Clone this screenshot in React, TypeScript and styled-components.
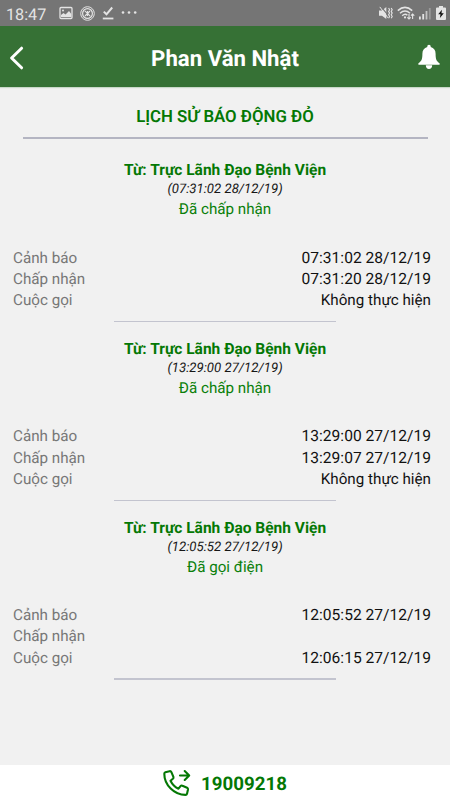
import React from 'react';
import styled, { createGlobalStyle } from 'styled-components';

const GlobalStyle = createGlobalStyle`
  * { box-sizing: border-box; }
  body {
    margin: 0;
    background: #f1f1f1;
    font-family: Roboto, "Noto Sans", sans-serif;
    text-rendering: geometricPrecision;
  }
`;

const Screen = styled.div`
  width: 450px;
  height: 800px;
  display: flex;
  flex-direction: column;
  background: #f1f1f1;
  overflow: hidden;
`;

const StatusBar = styled.div`
  height: 26px;
  flex: none;
  display: flex;
  align-items: center;
  justify-content: space-between;
  padding: 0 4px 0 6px;
  background: #757575;
  color: #e4e4e4;
`;

const Clock = styled.span`
  width: 47px;
  font-size: 16.2px;
  line-height: 26px;
  padding-top: 3px;
`;

const StatusGroup = styled.div<{ $gap: number }>`
  display: flex;
  align-items: center;
  gap: ${(p) => p.$gap}px;
  svg { display: block; }
`;

const Header = styled.header`
  height: 61px;
  flex: none;
  display: grid;
  grid-template-columns: 60px 1fr 60px;
  align-items: center;
  background: #367135;
  box-shadow: 0 1px 1px #c9d8c9;
  svg { display: block; }
`;

const HeaderTitle = styled.h1`
  margin: 0;
  padding-top: 5px;
  text-align: center;
  color: #fff;
  font-size: 22.2px;
  line-height: 28px;
  font-weight: 700;
`;

const HeaderButton = styled.button<{ $end?: boolean }>`
  border: 0;
  background: none;
  height: 61px;
  padding: ${(p) => (p.$end ? '0 9px 0 0' : '3px 0 0 9px')};
  display: flex;
  align-items: center;
  justify-content: ${(p) => (p.$end ? 'flex-end' : 'flex-start')};
`;

const Content = styled.main`
  flex: 1;
  display: flex;
  flex-direction: column;
`;

const PageTitle = styled.h2`
  margin: 19px 0 9px;
  text-align: center;
  font-size: 16.8px;
  line-height: 22px;
  font-weight: 600;
  color: #047804;
`;

const Rule = styled.div`
  height: 2px;
  margin: 0 22.5px 21px;
  background: #b4b5c2;
`;

const Entry = styled.section`
  height: 178.8px;
  display: flex;
  flex-direction: column;
  align-items: center;
`;

const Sender = styled.div`
  font-size: 15.5px;
  line-height: 20px;
  font-weight: 700;
  color: #047804;
`;

const Stamp = styled.div`
  margin-top: 1px;
  font-size: 13.2px;
  line-height: 17px;
  font-style: italic;
  color: #161616;
`;

const State = styled.div`
  font-size: 15.2px;
  line-height: 22px;
  color: #0a7f0a;
`;

const Details = styled.div`
  align-self: stretch;
  margin: 27.5px 19px 9.5px 13px;
`;

const Row = styled.div`
  height: 21.3px;
  display: flex;
  justify-content: space-between;
  font-size: 15.2px;
  line-height: 21.3px;
`;

const Label = styled.span`
  color: #777;
`;

const Value = styled.span<{ $numeric: boolean }>`
  color: #111;
  font-size: ${(p) => (p.$numeric ? '15.6px' : 'inherit')};
`;

const Divider = styled.div`
  width: 222px;
  height: 1.5px;
  background: #c3c4cf;
`;

const CallBar = styled.footer`
  height: 35px;
  flex: none;
  display: flex;
  align-items: center;
  justify-content: center;
  gap: 10px;
  background: #fff;
  color: #047804;
  svg { display: block; }
`;

const Phone = styled.span`
  padding-top: 3px;
  font-size: 18.7px;
  line-height: 24px;
  font-weight: 700;
`;

const ImageIcon = () => (
  <svg width="14" height="14" viewBox="0 0 14 14">
    <rect x="1" y="1.5" width="12" height="11" rx="1" fill="none" stroke="#e4e4e4" strokeWidth="1.3" />
    <circle cx="4" cy="4.6" r="1" fill="#e4e4e4" />
    <path d="M2 11V9l2.5-2 2 1.6L10 5l2.3 3v3z" fill="#e4e4e4" />
  </svg>
);

const CompassIcon = () => (
  <svg width="15" height="15" viewBox="0 0 15 15" fill="none" stroke="#e4e4e4">
    <circle cx="7.5" cy="7.5" r="6.8" strokeWidth="1" />
    <circle cx="7.5" cy="7.5" r="4.9" strokeWidth="1.2" />
    <path d="M4.8 4.8l2.2 2M10.200 10.200L8 8M10 5L5 10M7.500 5v5" strokeWidth="1.1" />
  </svg>
);

const DoneIcon = () => (
  <svg width="12" height="14" viewBox="0 0 12 14" fill="none" stroke="#e4e4e4">
    <path d="M1.8 5.6l2.7 2.7L10.2 1.5" strokeWidth="2" />
    <path d="M.8 12.5h10.6" strokeWidth="1.8" />
  </svg>
);

const MoreIcon = () => (
  <svg width="17" height="14" viewBox="0 0 17 14" fill="#e4e4e4">
    <circle cx="3" cy="6.5" r="1.3" />
    <circle cx="9" cy="6.5" r="1.3" />
    <circle cx="15.2" cy="6.5" r="1.3" />
  </svg>
);

const MuteIcon = () => (
  <svg width="15" height="14" viewBox="0 0 15 14">
    <path d="M1 4.5h3L8.3 1v12L4 9.7H1z" fill="#e4e4e4" />
    <path d="M3 .6l7 8.6" stroke="#757575" strokeWidth="1.1" />
    <path d="M1.8.9l8.2 11" stroke="#e4e4e4" strokeWidth="1" />
    <path d="M10.6 2l1 1.7-1 1.7 1 1.7-1 1.7 1 1.7-1 1.7M13.2 2l1 1.7-1 1.7 1 1.7-1 1.7 1 1.7-1 1.7" fill="none" stroke="#e4e4e4" strokeWidth="1.1" />
  </svg>
);

const WifiIcon = () => (
  <svg width="18" height="14" viewBox="0 0 18 14" fill="none" stroke="#e4e4e4">
    <path d="M.8 4.6Q8 -1.8 15.2 4.6M3 7.2Q8 2.7 13 7.2M5.2 9.7Q8 7 10.4 9.2" strokeWidth="1.5" />
    <circle cx="8" cy="11.4" r="1.1" fill="#e4e4e4" stroke="none" />
    <path d="M12 8v5M10.3 11.3L12 13l1.7-1.7M15.6 13V8M14 9.6L15.6 8l1.7 1.6" strokeWidth="1.1" />
  </svg>
);

const SignalIcon = () => (
  <svg width="13" height="13" viewBox="0 0 13 13" fill="#e4e4e4">
    <rect x="0" y="9.5" width="1.8" height="3" />
    <rect x="3.3" y="7" width="1.8" height="5.5" />
    <rect x="6.6" y="4" width="1.8" height="8.5" fill="#c4c4c4" />
    <rect x="9.9" y="1" width="1.8" height="11.5" fill="#999" />
  </svg>
);

const BatteryIcon = () => (
  <svg width="10" height="14" viewBox="0 0 10 14">
    <path d="M3 0h4v1.6h2q1 0 1 1V13q0 1-1 1H1q-1 0-1-1V2.6q0-1 1-1h2z" fill="#e4e4e4" />
    <path d="M5.9 3.8L2.2 8.2h2.3L3.9 12l3.9-4.7H5.5z" fill="#111" />
  </svg>
);

const BackIcon = () => (
  <svg width="15" height="24" viewBox="0 0 15 24" fill="none" stroke="#fff" strokeWidth="3" strokeLinecap="round" strokeLinejoin="round">
    <path d="M12.6 2.2L2.6 12l10 9.8" />
  </svg>
);

const BellIcon = () => (
  <svg width="24" height="26" viewBox="0 0 24 26" fill="#fff">
    <path d="M12 .8c1 0 1.7.7 1.7 1.7v.4c3.3.8 4.9 3.3 4.9 6.8 0 5.2.7 7.3 4 9.5v1.6H1.4v-1.6c3.3-2.2 4-4.3 4-9.5 0-3.5 1.6-6 4.9-6.8v-.4C10.3 1.5 11 .8 12 .8z" />
    <path d="M8.8 21.3h6.4c0 2.2-1.3 3.8-3.2 3.8s-3.2-1.6-3.2-3.8z" />
  </svg>
);

const CallIcon = () => (
  <svg width="28" height="28" viewBox="0 0 28 28" fill="none" stroke="currentColor" strokeWidth="2.1" strokeLinejoin="round" strokeLinecap="round">
    <path d="M2.3 3.2L6.6 2.2q1.3-.2 1.8.9l2 4.7q.4 1.1-.5 1.9L7.5 11.7q2.6 5.4 8 8l2-2.5q.8-1 1.900-.5l4.700 2q1.100.5.9 1.800l-1 4.200q-.3 1.200-1.500 1.200C11.200 25.900 1.300 16 1.300 4.700q0-1.200 1-1.500z" />
    <path d="M17 6.5h9M21.7 2l4.5 4.5-4.5 4.5" />
  </svg>
);

interface Alert {
  time: string;
  state: string;
  rows: [string, string][];
}

const alerts: Alert[] = [
  {
    time: '(07:31:02 28/12/19)',
    state: 'Đã chấp nhận',
    rows: [['Cảnh báo', '07:31:02 28/12/19'], ['Chấp nhận', '07:31:20 28/12/19'], ['Cuộc gọi', 'Không thực hiện']],
  },
  {
    time: '(13:29:00 27/12/19)',
    state: 'Đã chấp nhận',
    rows: [['Cảnh báo', '13:29:00 27/12/19'], ['Chấp nhận', '13:29:07 27/12/19'], ['Cuộc gọi', 'Không thực hiện']],
  },
  {
    time: '(12:05:52 27/12/19)',
    state: 'Đã gọi điện',
    rows: [['Cảnh báo', '12:05:52 27/12/19'], ['Chấp nhận', ''], ['Cuộc gọi', '12:06:15 27/12/19']],
  },
];

export default function App() {
  return (
    <Screen>
      <GlobalStyle />
      <StatusBar>
        <StatusGroup $gap={6}>
          <Clock>18:47</Clock>
          <StatusGroup $gap={7}>
            <ImageIcon />
            <CompassIcon />
            <DoneIcon />
          </StatusGroup>
          <MoreIcon />
        </StatusGroup>
        <StatusGroup $gap={4}>
          <MuteIcon />
          <WifiIcon />
          <SignalIcon />
          <BatteryIcon />
        </StatusGroup>
      </StatusBar>
      <Header>
        <HeaderButton aria-label="Quay lại"><BackIcon /></HeaderButton>
        <HeaderTitle>Phan Văn Nhật</HeaderTitle>
        <HeaderButton $end aria-label="Thông báo"><BellIcon /></HeaderButton>
      </Header>
      <Content>
        <PageTitle>LỊCH SỬ BÁO ĐỘNG ĐỎ</PageTitle>
        <Rule />
        {alerts.map((alert) => (
          <Entry key={alert.time}>
            <Sender>Từ: Trực Lãnh Đạo Bệnh Viện</Sender>
            <Stamp>{alert.time}</Stamp>
            <State>{alert.state}</State>
            <Details>
              {alert.rows.map(([label, value]) => (
                <Row key={label}>
                  <Label>{label}</Label>
                  <Value $numeric={/^\d/.test(value)}>{value}</Value>
                </Row>
              ))}
            </Details>
            <Divider />
          </Entry>
        ))}
      </Content>
      <CallBar>
        <CallIcon />
        <Phone>19009218</Phone>
      </CallBar>
    </Screen>
  );
}
